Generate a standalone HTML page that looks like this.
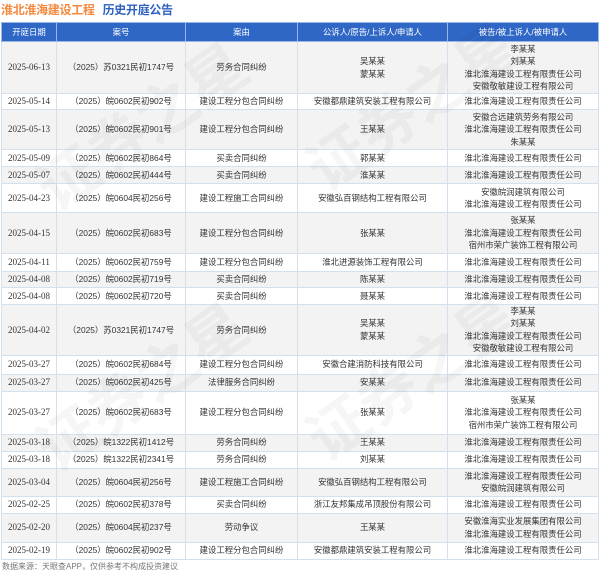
<!DOCTYPE html>
<html><head><meta charset="utf-8"><style>
body{margin:0;width:600px;height:574px;background:#fff;font-family:"Liberation Sans","Noto Sans CJK SC",sans-serif;position:relative;overflow:hidden}
.t{position:absolute;left:1px;top:1px;font-size:12px;font-weight:bold;letter-spacing:-0.3px}
.t .a{color:#f4883c}.t .b{color:#2f62c0;margin-left:8px}
table{position:absolute;left:1px;top:22px;width:597px;border-collapse:collapse;table-layout:fixed;font-size:8.4px;color:#333}
td,th{border:1px solid #d4e0f0;text-align:center;vertical-align:middle;padding:0;line-height:12.4px;white-space:nowrap;overflow:hidden}
th{background:#2f67c6;color:#fff;font-weight:normal;height:18px;border-color:#9ab6e2}
tr:nth-child(even) td{background:#f3f3f3}
td.d{font-family:"Liberation Serif","Noto Serif CJK SC",serif;font-size:9px}
.f{position:absolute;left:2px;top:561px;font-size:8px;color:#777}
.w{position:absolute;font-size:60px;color:rgba(0,0,0,0.035);transform:rotate(-35deg);font-weight:bold}
</style></head><body>
<div class="t"><span class="a">淮北淮海建设工程</span><span class="b">历史开庭公告</span></div>
<table>
<colgroup><col style="width:55px"><col style="width:129px"><col style="width:112px"><col style="width:150px"><col style="width:151px"></colgroup>
<tr><th>开庭日期</th><th>案号</th><th>案由</th><th>公诉人/原告/上诉人/申请人</th><th>被告/被上诉人/被申请人</th></tr>
<tr style="height:52px"><td class="d">2025-06-13</td><td>（2025）苏0321民初1747号</td><td>劳务合同纠纷</td><td>吴某某<br>蒙某某</td><td>李某某<br>刘某某<br>淮北淮海建设工程有限责任公司<br>安徽敬敏建设工程有限公司</td></tr>
<tr style="height:16px"><td class="d">2025-05-14</td><td>（2025）皖0602民初902号</td><td>建设工程分包合同纠纷</td><td>安徽都鼎建筑安装工程有限公司</td><td>淮北淮海建设工程有限责任公司</td></tr>
<tr style="height:40px"><td class="d">2025-05-13</td><td>（2025）皖0602民初901号</td><td>建设工程分包合同纠纷</td><td>王某某</td><td>安徽合远建筑劳务有限公司<br>淮北淮海建设工程有限责任公司<br>朱某某</td></tr>
<tr style="height:17px"><td class="d">2025-05-09</td><td>（2025）皖0602民初864号</td><td>买卖合同纠纷</td><td>郭某某</td><td>淮北淮海建设工程有限责任公司</td></tr>
<tr style="height:17px"><td class="d">2025-05-07</td><td>（2025）皖0602民初444号</td><td>买卖合同纠纷</td><td>淮某某</td><td>淮北淮海建设工程有限责任公司</td></tr>
<tr style="height:29px"><td class="d">2025-04-23</td><td>（2025）皖0604民初256号</td><td>建设工程施工合同纠纷</td><td>安徽弘百钢结构工程有限公司</td><td>安徽皖润建筑有限公司<br>淮北淮海建设工程有限责任公司</td></tr>
<tr style="height:41px"><td class="d">2025-04-15</td><td>（2025）皖0602民初683号</td><td>建设工程分包合同纠纷</td><td>张某某</td><td>张某某<br>淮北淮海建设工程有限责任公司<br>宿州市荣广装饰工程有限公司</td></tr>
<tr style="height:18px"><td class="d">2025-04-11</td><td>（2025）皖0602民初759号</td><td>建设工程分包合同纠纷</td><td>淮北进源装饰工程有限公司</td><td>淮北淮海建设工程有限责任公司</td></tr>
<tr style="height:16px"><td class="d">2025-04-08</td><td>（2025）皖0602民初719号</td><td>买卖合同纠纷</td><td>陈某某</td><td>淮北淮海建设工程有限责任公司</td></tr>
<tr style="height:17px"><td class="d">2025-04-08</td><td>（2025）皖0602民初720号</td><td>买卖合同纠纷</td><td>聂某某</td><td>淮北淮海建设工程有限责任公司</td></tr>
<tr style="height:49px"><td class="d">2025-04-02</td><td>（2025）苏0321民初1747号</td><td>劳务合同纠纷</td><td>吴某某<br>蒙某某</td><td>李某某<br>刘某某<br>淮北淮海建设工程有限责任公司<br>安徽敬敏建设工程有限公司</td></tr>
<tr style="height:19px"><td class="d">2025-03-27</td><td>（2025）皖0602民初684号</td><td>建设工程分包合同纠纷</td><td>安徽合建消防科技有限公司</td><td>淮北淮海建设工程有限责任公司</td></tr>
<tr style="height:17px"><td class="d">2025-03-27</td><td>（2025）皖0602民初425号</td><td>法律服务合同纠纷</td><td>安某某</td><td>淮北淮海建设工程有限责任公司</td></tr>
<tr style="height:43px"><td class="d">2025-03-27</td><td>（2025）皖0602民初683号</td><td>建设工程分包合同纠纷</td><td>张某某</td><td>张某某<br>淮北淮海建设工程有限责任公司<br>宿州市荣广装饰工程有限公司</td></tr>
<tr style="height:17px"><td class="d">2025-03-18</td><td>（2025）皖1322民初1412号</td><td>劳务合同纠纷</td><td>王某某</td><td>淮北淮海建设工程有限责任公司</td></tr>
<tr style="height:17px"><td class="d">2025-03-18</td><td>（2025）皖1322民初2341号</td><td>劳务合同纠纷</td><td>刘某某</td><td>淮北淮海建设工程有限责任公司</td></tr>
<tr style="height:28px"><td class="d">2025-03-04</td><td>（2025）皖0604民初256号</td><td>建设工程施工合同纠纷</td><td>安徽弘百钢结构工程有限公司</td><td>淮北淮海建设工程有限责任公司<br>安徽皖润建筑有限公司</td></tr>
<tr style="height:17px"><td class="d">2025-02-25</td><td>（2025）皖0602民初378号</td><td>买卖合同纠纷</td><td>浙江友邦集成吊顶股份有限公司</td><td>淮北淮海建设工程有限责任公司</td></tr>
<tr style="height:29px"><td class="d">2025-02-20</td><td>（2025）皖0604民初237号</td><td>劳动争议</td><td>王某某</td><td>安徽淮海实业发展集团有限公司<br>淮北淮海建设工程有限责任公司</td></tr>
<tr style="height:17px"><td class="d">2025-02-19</td><td>（2025）皖0602民初902号</td><td>建设工程分包合同纠纷</td><td>安徽都鼎建筑安装工程有限公司</td><td>淮北淮海建设工程有限责任公司</td></tr>
</table>
<div class="w" style="left:20px;top:80px">证券之星</div>
<div class="w" style="left:290px;top:60px">证券之星</div>
<div class="w" style="left:20px;top:340px">证券之星</div>
<div class="w" style="left:290px;top:330px">证券之星</div>
<div class="f">数据来源：天眼查APP，仅供参考不构成投资建议</div>
</body></html>
